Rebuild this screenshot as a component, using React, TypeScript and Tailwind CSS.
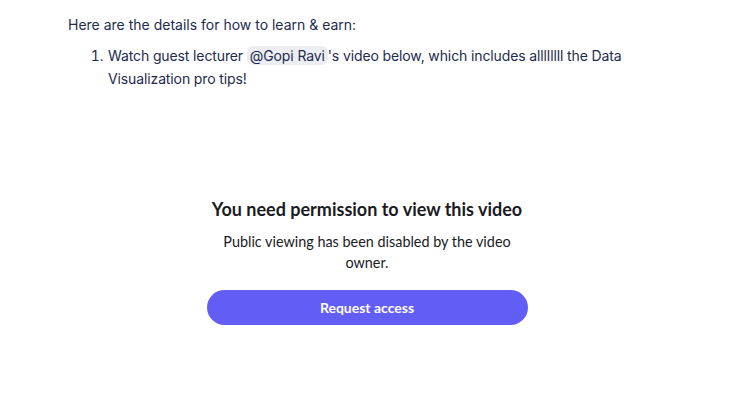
export default function App() {
  return (
    <div className="min-h-[415px] w-[741px] bg-white font-['Inter',sans-serif] text-[#1d2b4f]">
      <div className="w-[640px] pl-[68px] pt-[13px] text-[14px] leading-[23px]">
        <p>Here are the details for how to learn &amp; earn:</p>
        <ol className="mt-[8px] list-decimal pl-[39px]">
          <li className="pl-[1px] tracking-[-0.12px]">
            Watch guest lecturer{" "}
            <span className="rounded-[6px] bg-[#eceef2] px-[3px] py-[1px]">@Gopi Ravi</span>
            's video below, which includes allllllll the Data Visualization pro tips!
          </li>
        </ol>
      </div>

      <div className="mt-[107px] flex flex-col items-center pr-[7px]">
        <h2 className="font-['Lato',sans-serif] text-[18px] font-bold leading-[24px] text-[#1b1b1f]">
          You need permission to view this video
        </h2>
        <p className="mt-[10px] w-[300px] text-center font-['Lato',sans-serif] text-[14.4px] leading-[21px] text-[#1b1b1f]">
          Public viewing has been disabled by the video owner.
        </p>
        <button
          type="button"
          className="mt-[17px] h-[35px] w-[321px] rounded-full bg-[#625df5] font-['Lato',sans-serif] text-[14px] font-bold text-white"
        >
          Request access
        </button>
      </div>
    </div>
  );
}
